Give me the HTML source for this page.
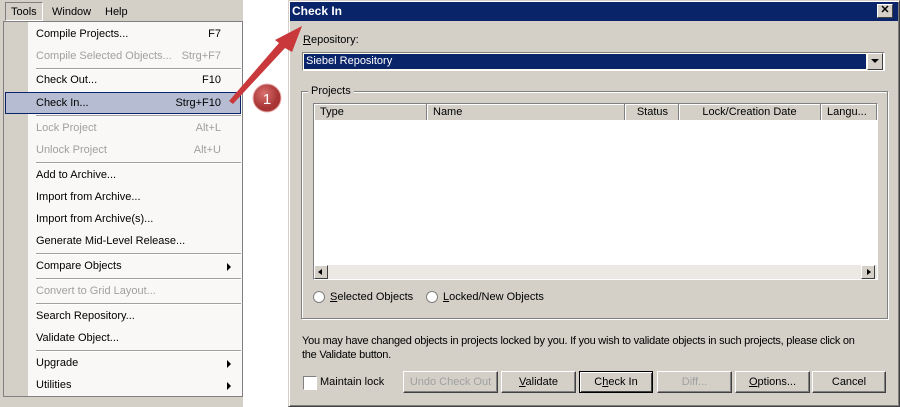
<!DOCTYPE html>
<html><head><style>
body{margin:0;width:900px;height:407px;position:relative;overflow:hidden;background:#fff;font-family:"Liberation Sans",sans-serif;font-size:11px;color:#000}
.a{position:absolute}
.mi{position:absolute;left:36px;height:22px;line-height:23px;width:200px}
.mi .k{position:absolute;right:15px;top:0}
.dis{color:#a0a0a0}
.sep{position:absolute;left:36px;width:205px;height:1px;background:#a0a0a0;border-bottom:1px solid #fff}
.tri{position:absolute;right:8px;top:8px;width:0;height:0;border-left:4px solid #000;border-top:4px solid transparent;border-bottom:4px solid transparent}
.btn{position:absolute;top:371px;height:22px;background:#d4d0c8;box-sizing:border-box;border:1px solid;border-color:#fff #404040 #404040 #fff;box-shadow:inset -1px -1px #808080;text-align:center;line-height:20px;font-size:11px}
.hd{position:absolute;top:0;height:16px;line-height:16px;box-sizing:border-box;border-right:1px solid #808080;box-shadow:inset 1px 1px #fff;padding-left:6px}
u{text-decoration:underline}
</style></head><body>
<div class="a" style="left:0;top:0;width:245px;height:407px;background:#d4d0c8"></div>
<div class="a" style="left:5px;top:2px;width:38px;height:19px;border:1px solid;border-color:#808080 #fff #fff #808080;box-sizing:border-box"></div>
<div class="a" style="left:11px;top:6px">Tools</div>
<div class="a" style="left:52px;top:6px">Window</div>
<div class="a" style="left:105px;top:6px">Help</div>
<div class="a" style="left:3px;top:21px;width:240px;height:376px;background:#f9f8f6;border:1px solid #808080;box-sizing:border-box"></div>
<div class="a" style="left:4px;top:22px;width:24px;height:374px;background:#d4d0c8"></div>
<div class="a" style="left:5px;top:92px;width:236px;height:22px;background:#b6bdd2;border:1px solid #0a246a;box-sizing:border-box"></div>
<div class="mi" style="top:23px">Compile Projects...<span class="k">F7</span></div>
<div class="mi dis" style="top:45px">Compile Selected Objects...<span class="k">Strg+F7</span></div>
<div class="sep" style="top:68px"></div>
<div class="mi" style="top:69px">Check Out...<span class="k">F10</span></div>
<div class="mi" style="top:92px">Check In...<span class="k">Strg+F10</span></div>
<div class="sep" style="top:115px"></div>
<div class="mi dis" style="top:117px">Lock Project<span class="k">Alt+L</span></div>
<div class="mi dis" style="top:139px">Unlock Project<span class="k">Alt+U</span></div>
<div class="sep" style="top:162px"></div>
<div class="mi" style="top:164px">Add to Archive...</div>
<div class="mi" style="top:186px">Import from Archive...</div>
<div class="mi" style="top:208px">Import from Archive(s)...</div>
<div class="mi" style="top:230px">Generate Mid-Level Release...</div>
<div class="sep" style="top:253px"></div>
<div class="mi" style="top:255px;width:203px">Compare Objects<span class="tri"></span></div>
<div class="sep" style="top:278px"></div>
<div class="mi dis" style="top:280px">Convert to Grid Layout...</div>
<div class="sep" style="top:303px"></div>
<div class="mi" style="top:305px">Search Repository...</div>
<div class="mi" style="top:327px">Validate Object...</div>
<div class="sep" style="top:350px"></div>
<div class="mi" style="top:352px;width:203px">Upgrade<span class="tri"></span></div>
<div class="mi" style="top:374px;width:203px">Utilities<span class="tri"></span></div>
<div class="a" style="left:243px;top:0;width:45px;height:407px;background:#fff"></div>

<div class="a" style="left:288px;top:0;width:612px;height:407px;background:#d4d0c8;border:1px solid;border-color:#d4d0c8 #404040 #404040 #d4d0c8;box-sizing:border-box;box-shadow:inset 1px 1px #fff,inset -1px -1px #808080"></div>
<div class="a" style="left:290px;top:2px;width:608px;height:19px;background:#0a246a"></div>
<div class="a" style="left:292px;top:4px;color:#fff;font-weight:bold;font-size:12px">Check In</div>
<div class="a" style="left:877px;top:4px;width:16px;height:14px;background:#d4d0c8;border:1px solid;border-color:#fff #404040 #404040 #fff;box-sizing:border-box;text-align:center;line-height:11px;font-weight:bold;font-size:11px">✕</div>
<div class="a" style="left:303px;top:34px"><u>R</u>epository:</div>
<div class="a" style="left:302px;top:52px;width:583px;height:19px;background:#fff;border:1px solid;border-color:#808080 #fff #fff #808080;box-sizing:border-box"></div>
<div class="a" style="left:304px;top:54px;width:562px;height:15px;background:#0a246a;color:#fff;line-height:15px;padding-left:2px;box-sizing:border-box;outline:1px dotted #ffd">Siebel Repository</div>
<div class="a" style="left:867px;top:53px;width:16px;height:17px;background:#d4d0c8;border:1px solid;border-color:#fff #404040 #404040 #fff;box-sizing:border-box"><div class="a" style="left:3px;top:5px;border-top:4px solid #000;border-left:4px solid transparent;border-right:4px solid transparent"></div></div>
<div class="a" style="left:301px;top:91px;width:585px;height:226px;border:1px solid #808080;box-shadow:1px 1px #fff,inset 1px 1px #fff"></div>
<div class="a" style="left:308px;top:85px;background:#d4d0c8;padding:0 3px">Projects</div>
<div class="a" style="left:313px;top:103px;width:565px;height:177px;background:#fff;border:1px solid;border-color:#808080 #fff #fff #808080;box-sizing:border-box">
 <div class="a" style="left:0;top:0;width:563px;height:16px;background:#d4d0c8"></div>
 <div class="hd" style="left:0;width:113px">Type</div>
 <div class="hd" style="left:113px;width:198px">Name</div>
 <div class="hd" style="left:311px;width:54px;text-align:right;padding-right:10px">Status</div>
 <div class="hd" style="left:365px;width:142px;text-align:center;padding:0">Lock/Creation Date</div>
 <div class="hd" style="left:507px;width:56px">Langu...</div>
 <div class="a" style="left:0;top:161px;width:563px;height:14px;background:#ece9e4"></div>
 <div class="a" style="left:0;top:161px;width:14px;height:14px;background:#d4d0c8;border:1px solid;border-color:#fff #404040 #404040 #fff;box-sizing:border-box"><div class="a" style="left:3px;top:3px;border-right:4px solid #000;border-top:3px solid transparent;border-bottom:3px solid transparent"></div></div>
 <div class="a" style="left:547px;top:161px;width:14px;height:14px;background:#d4d0c8;border:1px solid;border-color:#fff #404040 #404040 #fff;box-sizing:border-box"><div class="a" style="left:5px;top:3px;border-left:4px solid #000;border-top:3px solid transparent;border-bottom:3px solid transparent"></div></div>
</div>
<div class="a" style="left:313px;top:291px;width:10px;height:10px;border-radius:50%;background:#fff;border:1px solid #808080"></div>
<div class="a" style="left:330px;top:291px"><u>S</u>elected Objects</div>
<div class="a" style="left:426px;top:291px;width:10px;height:10px;border-radius:50%;background:#fff;border:1px solid #808080"></div>
<div class="a" style="left:443px;top:291px"><u>L</u>ocked/New Objects</div>
<div class="a" style="left:302px;top:334px;width:590px;line-height:14px;letter-spacing:-0.25px">You may have changed objects in projects locked by you. If you wish to validate objects in such projects, please click on<br>the Validate button.</div>
<div class="a" style="left:303px;top:376px;width:12px;height:12px;background:#fff;border:1px solid;border-color:#808080 #fff #fff #808080"></div>
<div class="a" style="left:320px;top:376px">Maintain lock</div>
<div class="btn dis" style="left:403px;width:95px">Undo Check Out</div>
<div class="btn" style="left:501px;width:75px"><u>V</u>alidate</div>
<div class="btn" style="left:579px;width:74px;border:1px solid #000;box-shadow:inset 1px 1px #fff,inset -1px -1px #404040">C<u>h</u>eck In</div>
<div class="btn dis" style="left:657px;width:75px">Diff...</div>
<div class="btn" style="left:735px;width:75px"><u>O</u>ptions...</div>
<div class="btn" style="left:812px;width:74px">Cancel</div>

<svg class="a" style="left:0;top:0" width="900" height="407">
 <defs><radialGradient id="g" cx="40%" cy="35%"><stop offset="0" stop-color="#d9716f"/><stop offset="1" stop-color="#a83434"/></radialGradient></defs>
 <polygon points="229,101 279,43 275,40 302,26 292,52 285,48 233,104" fill="#c9393b"/>
 <circle cx="267" cy="98" r="14" fill="url(#g)" stroke="#e8b0b0" stroke-width="1"/>
 <text x="267" y="104" text-anchor="middle" fill="#fff" font-family="Liberation Sans" font-size="15">1</text>
</svg>
</body></html>
